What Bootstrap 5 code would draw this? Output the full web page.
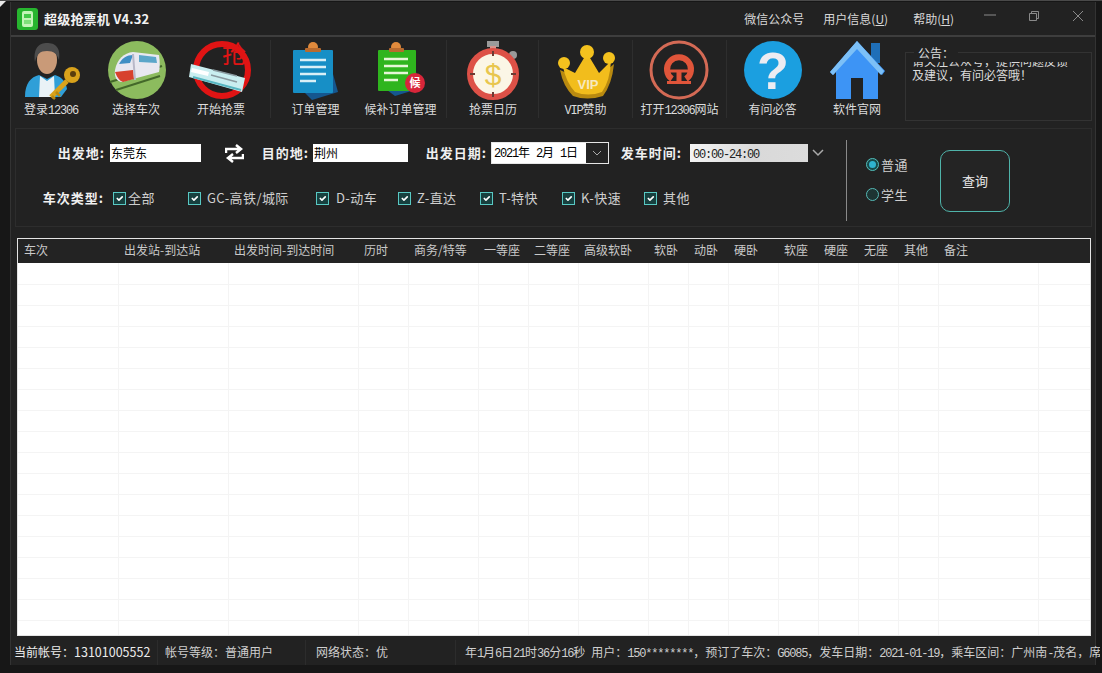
<!DOCTYPE html>
<html lang="zh-CN">
<head>
    <meta charset="UTF-8">
    <title>超级抢票机 V4.32</title>
    <link href="https://cdn.jsdelivr.net/npm/bootstrap@5.3.0/dist/css/bootstrap.min.css" rel="stylesheet">
    <style>
        html, body {
            margin: 0;
            height: 673px;
            overflow: hidden;
            background-color: #171717;
        }
        body, .form-control, .btn, .table {
            font-family: "Noto Sans CJK SC", "Liberation Sans", sans-serif;
            font-size: 12px;
        }
        .latin-run {
            font-family: "Liberation Mono", monospace;
            font-size: 12px;
            letter-spacing: -1.2px;
        }
        .app-window {
            width: 1102px;
            height: 673px;
            padding: 1px 6px 8px 10px;
            background-color: #171717;
            border-top: 1px solid #4a4a4a;
            position: relative;
            overflow: hidden;
        }
        .corner-tl {
            position: absolute;
            left: 0;
            top: -1px;
            width: 0;
            height: 0;
            border-top: 7px solid #e8e8e8;
            border-right: 7px solid transparent;
        }
        .app-inner {
            height: 100%;
            background-color: #222;
            display: flex;
            flex-direction: column;
            border-left: 1px solid #333;
            border-right: 1px solid #333;
        }
        .title-bar {
            height: 35px;
            flex: none;
            color: #e6e6e6;
            border-bottom: 2px solid #3e3e3e;
        }
        .app-logo {
            width: 21px;
            height: 22px;
            flex: none;
            margin-left: 6px;
            margin-right: 6px;
        }
        .app-title {
            font-weight: 700;
            font-size: 13px;
            letter-spacing: 0.2px;
            color: #f2f2f2;
        }
        .top-menu {
            margin-right: 11px;
            color: #d8d8d8;
            white-space: nowrap;
        }
        .top-menu svg {
            display: block;
            margin-bottom: 6px;
        }
        .tool-row {
            height: 85px;
            flex: none;
        }
        .tool-item {
            height: 85px;
            flex: none;
            padding-top: 3px;
            color: #dcdcdc;
            white-space: nowrap;
            line-height: 16px;
        }
        .tool-item svg {
            display: block;
            flex: none;
            margin-bottom: 1px;
            overflow: visible;
        }
        .tool-sep {
            width: 1px;
            height: 78px;
            margin-top: 3px;
            background-color: #2e2e2e;
            flex: none;
        }
        .notice-box {
            position: relative;
            width: 187px;
            height: 69px;
            flex: none;
            margin-top: 15px;
            margin-left: 9px;
            border: 1px solid #333;
            color: #dcdcdc;
            line-height: 14px;
        }
        .notice-title {
            position: absolute;
            left: 8px;
            top: -7px;
            padding: 0 4px;
            background-color: #222;
            line-height: 14px;
        }
        .notice-clip {
            height: 59px;
            margin: 9px 4px 0 6px;
            overflow: hidden;
        }
        .notice-clip p {
            margin: -8px 0 0;
        }
        .search-panel {
            height: 99px;
            flex: none;
            margin: 6px 0 0 4px;
            width: 1077px;
            border: 1px solid #2d2d2d;
            color: #e6e6e6;
        }
        .search-rows {
            width: 830px;
            flex: none;
        }
        .search-row1 {
            height: 24px;
            margin-top: 12px;
        }
        .search-row2 {
            height: 22px;
            margin-top: 22px;
        }
        .field-label {
            font-weight: 700;
            font-size: 13px;
            letter-spacing: 1px;
            white-space: nowrap;
            text-align: right;
            color: #f0f0f0;
            flex: none;
        }
        .form-control.dark-input {
            height: 18px;
            min-height: 18px;
            flex: none;
            padding: 0 1px;
            border: 0;
            border-radius: 0;
            color: #000;
            line-height: 18px;
            background-color: #fff;
        }
        .date-combo {
            width: 118px;
            height: 22px;
            flex: none;
            border: 1px solid #e6e6e6;
            background-color: #fff;
            color: #000;
        }
        .date-text {
            padding-left: 2px;
            white-space: pre;
        }
        .combo-arrow {
            width: 22px;
            height: 100%;
            background-color: #242424;
        }
        .time-combo {
            width: 118px;
            height: 18px;
            flex: none;
            padding-left: 3px;
            line-height: 18px;
            color: #222;
            background: linear-gradient(to right, #f4f4f4, #d9d9d9 55%, #dcdcdc);
        }
        .check-item {
            margin: 0;
            padding: 0;
            min-height: 0;
            display: flex;
            align-items: center;
            flex: none;
            font-size: 13px;
            letter-spacing: 0.4px;
            white-space: nowrap;
            color: #cfcfcf;
        }
        .form-check-input.teal-box {
            float: none;
            flex: none;
            width: 13px;
            height: 13px;
            margin: 0 6px 0 0;
            border: 1px solid #59c9c4;
            border-radius: 0;
            background-color: #17403f;
        }
        .form-check-input.teal-box:checked {
            background-color: #17403f;
            border-color: #59c9c4;
        }
        .form-check-input.teal-radio {
            float: none;
            flex: none;
            width: 13px;
            height: 13px;
            margin: 0 2px 0 0;
            border: 1px solid #56b9b5;
            background-color: #1d3433;
        }
        .form-check-input.teal-radio:checked {
            background-color: #2fb3d0;
            border: 3px solid #174a4a;
            background-image: none;
            outline: 1px solid #56b9b5;
            outline-offset: -1px;
        }
        .search-divider {
            width: 1px;
            height: 81px;
            margin-top: 11px;
            background-color: #8a8a8a;
        }
        .radio-col {
            width: 74px;
            padding-left: 19px;
            padding-top: 26px;
            gap: 10px;
        }
        .query-btn {
            width: 70px;
            height: 62px;
            margin: 21px 0 0 19px;
            padding: 0;
            font-size: 13px;
            color: #e6e6e6;
            background-color: #242424;
            border: 1px solid #4fb3a9;
            border-radius: 10px;
        }
        .grid-wrap {
            height: 398px;
            flex: none;
            width: 1074px;
            margin: 11px 0 0 6px;
            border: 1px solid #e4e4e4;
            background-color: #fff;
            overflow: hidden;
        }
        .ticket-table {
            table-layout: fixed;
            width: 1072px;
            margin: 0;
            --bs-table-bg: #fff;
        }
        .ticket-table thead th {
            height: 24px;
            padding: 0 0 2px 6px;
            font-weight: 400;
            color: #c9c9c9;
            background-color: #232323;
            border: 0;
            white-space: nowrap;
            vertical-align: middle;
            overflow: visible;
        }
        .ticket-table tbody td {
            height: 21px;
            padding: 0;
            border-width: 0 1px 1px 0;
            border-style: solid;
            border-color: #f4f4f4;
        }
        .status-bar {
            height: 25px;
            flex: none;
            margin-top: 4px;
            margin-right: -5px;
            color: #cfcfcf;
            white-space: nowrap;
            overflow: hidden;
            line-height: 24px;
        }
        .status-cell {
            flex: none;
            height: 25px;
            overflow: hidden;
            border-right: 1px solid #2c2c2c;
        }
        .status-account {
            width: 147px;
            padding-left: 3px;
            color: #ececec;
        }
        .status-account b {
            font-weight: 400;
            font-size: 12.5px;
        }
        .status-level {
            width: 148px;
            padding-left: 7px;
        }
        .status-net {
            width: 150px;
            padding-left: 10px;
        }
        .status-ticker {
            flex: none;
            width: 645px;
            padding-left: 9px;
            overflow: hidden;
            white-space: pre;
        }
    </style>
</head>
<body>

<div class="app-window">
    <div class="corner-tl"></div>
    <div class="app-inner">

        <!-- title bar -->
        <div class="title-bar d-flex align-items-center">
            <svg class="app-logo" viewBox="0 0 21 22">
                <rect width="21" height="22" rx="3" fill="#27b52f"/>
                <rect x="5" y="3" width="11" height="16" rx="2" fill="#c4f5b8"/>
                <rect x="7" y="6" width="7" height="4" fill="#45c94a"/>
                <rect x="7" y="12" width="7" height="4" fill="#7fe07a"/>
            </svg>
            <span class="app-title">超级抢票机 V4.32</span>
            <div class="top-menu ms-auto d-flex align-items-center">
                <span style="margin-right:19px">微信公众号</span>
                <span style="margin-right:25px">用户信息(<u>U</u>)</span>
                <span style="margin-right:30px">帮助(<u>H</u>)</span>
                <svg style="margin-right:32px" width="12" height="12" viewBox="0 0 12 12"><path d="M0 5h12" stroke="#8a8a8a"/></svg>
                <svg style="margin-right:32px" width="12" height="12" viewBox="0 0 12 12"><path d="M1.500 3.500h7v7h-7zM3.500 3V1.500h7v7H9" fill="none" stroke="#8a8a8a"/></svg>
                <svg width="12" height="12" viewBox="0 0 12 12"><path d="M1 1l10 10M11 1L1 11" stroke="#8a8a8a"/></svg>
            </div>
        </div>

        <!-- toolbar -->
        <div class="tool-row d-flex">
            <div class="tool-item d-flex flex-column align-items-center" style="width:80px">
                <svg width="64" height="60" viewBox="0 0 64 60">
                    <path d="M6 57c0-14 6-20 14-22l8 4 8-4c7 2 11 7 12 14l-6 8z" fill="#2f9fd8"/>
                    <path d="M21 36l7 5 7-5 1 21H20z" fill="#e9f2f6"/>
                    <ellipse cx="28" cy="20" rx="10" ry="14" fill="#c99a78"/>
                    <path d="M16 22C14 8 20 3 28 3s14 4 12 17c-2-6-5-9-12-9s-10 3-12 11z" fill="#4c4c4c"/>
                    <circle cx="53" cy="35" r="8" fill="#d9a21b"/>
                    <circle cx="54" cy="34" r="3" fill="#5a3d0d"/>
                    <path d="M48 41L32 57" stroke="#d9a21b" stroke-width="5"/>
                    <path d="M37 52l4 4M33 56l3 3" stroke="#b98812" stroke-width="2.500"/>
                </svg>
                <span>登录<span class="latin-run">12306</span></span>
            </div>
            <div class="tool-item d-flex flex-column align-items-center" style="width:90px">
                <svg width="64" height="60" viewBox="0 0 64 60">
                    <circle cx="33" cy="30" r="29" fill="#8cbb5e"/>
                    <path d="M6 42l52-16" stroke="#43682a" stroke-width="2"/>
                    <path d="M12 50l44-14" stroke="#43682a" stroke-width="2"/>
                    <path d="M11 30c2-11 9-17 18-18l26 3c1 7 1 12 0 17L18 42c-5 0-8-5-7-12z" fill="#e8e8f0"/>
                    <path d="M11 32c3 7 5 9 8 10l11-3-1-9z" fill="#d7412d"/>
                    <path d="M15 24c3-6 8-9 14-9l-3 8z" fill="#3f8fc4"/>
                    <path d="M35 15l17 2 1 6-18-1z" fill="#5ba6c9"/>
                    <path d="M29 14l2 26" stroke="#b8b8c8" stroke-width="2"/>
                </svg>
                <span>选择车次</span>
            </div>
            <div class="tool-item d-flex flex-column align-items-center" style="width:80px">
                <svg width="64" height="60" viewBox="0 0 64 60">
                    <circle cx="33" cy="30" r="26" fill="none" stroke="#e01414" stroke-width="6"/>
                    <path d="M2 24L56 38l-3 14L0 37z" fill="#c9eef0"/>
                    <path d="M3 28l17 4-1 4-17-4z" fill="#fff"/>
                    <path d="M4 37l48 13" stroke="#58b7c2" stroke-width="2"/>
                    <path d="M24 30l24 6M22 35l26 7" stroke="#8a9aa0" stroke-width="1.500"/>
                    <text x="45" y="23" text-anchor="middle" font-family="Noto Sans CJK SC" font-size="24" fill="#e01414">抢</text>
                </svg>
                <span>开始抢票</span>
            </div>
            <div class="tool-sep" style="margin-left:9px;margin-right:2px"></div>
            <div class="tool-item d-flex flex-column align-items-center" style="width:85px">
                <svg width="64" height="60" viewBox="0 0 64 60">
                    <path d="M44 16l10 36-26 8-8-8z" fill="#15578f"/>
                    <rect x="9" y="10" width="40" height="43" rx="1" fill="#178fc6"/>
                    <path d="M16 20h26M16 27h26M16 34h26M16 41h16" stroke="#d9f0f7" stroke-width="2.500"/>
                    <circle cx="29" cy="7" r="5" fill="#e08a3c"/>
                    <rect x="21" y="8" width="16" height="4" rx="1" fill="#b86b2f"/>
                </svg>
                <span>订单管理</span>
            </div>
            <div class="tool-item d-flex flex-column align-items-center" style="width:85px">
                <svg width="64" height="60" viewBox="0 0 64 60">
                    <path d="M42 16l10 32-26 8-8-6z" fill="#15578f"/>
                    <rect x="9" y="10" width="38" height="41" rx="1" fill="#2fb51e"/>
                    <path d="M15 19h24M15 26h24M15 33h24M15 40h14" stroke="#e6f7d8" stroke-width="2.500"/>
                    <circle cx="27" cy="7" r="5" fill="#e08a3c"/>
                    <rect x="20" y="8" width="15" height="4" rx="1" fill="#b86b2f"/>
                    <circle cx="46" cy="43" r="10" fill="#d8263a"/>
                    <text x="46" y="47" text-anchor="middle" font-family="Noto Sans CJK SC" font-size="11" font-weight="700" fill="#fff">候</text>
                </svg>
                <span>候补订单管理</span>
            </div>
            <div class="tool-sep" style="margin-left:3px;margin-right:1px"></div>
            <div class="tool-item d-flex flex-column align-items-center" style="width:90px">
                <svg width="64" height="60" viewBox="0 0 64 60">
                    <rect x="26" y="1" width="12" height="6" fill="#9a9a9a"/>
                    <rect x="29" y="6" width="6" height="4" fill="#d9928a"/>
                    <circle cx="52" cy="15" r="4" fill="#9a9a9a"/>
                    <circle cx="32" cy="34" r="23" fill="#fbf6e6" stroke="#dd5147" stroke-width="6"/>
                    <path d="M32 11v5M32 52v5M9 34h5M50 34h5" stroke="#6b3b34" stroke-width="2"/>
                    <text x="32" y="45" text-anchor="middle" font-family="Liberation Sans" font-size="30" fill="#e8c64e">$</text>
                </svg>
                <span>抢票日历</span>
            </div>
            <div class="tool-sep"></div>
            <div class="tool-item d-flex flex-column align-items-center" style="width:93px">
                <svg width="64" height="60" viewBox="0 0 64 60">
                    <path d="M6 30Q9 46 19 56Q33 61 49 56Q58 44 60 24L46 36L34 16L22 37Z" fill="#b98a10"/>
                    <path d="M9 27Q12 42 21 52Q34 57 48 52Q56 41 57 21L45 33L33 13L21 33Z" fill="#f2bd1c"/>
                    <circle cx="10" cy="23" r="6" fill="#f4c21e"/>
                    <circle cx="33" cy="12" r="7" fill="#f4c21e"/>
                    <circle cx="55" cy="18" r="6" fill="#f4c21e"/>
                    <text x="34" y="49" text-anchor="middle" font-family="Liberation Sans" font-size="13" font-weight="700" fill="#f7e9c0">VIP</text>
                </svg>
                <span><span class="latin-run">VIP</span>赞助</span>
            </div>
            <div class="tool-sep"></div>
            <div class="tool-item d-flex flex-column align-items-center" style="width:93px">
                <svg width="64" height="60" viewBox="0 0 64 60">
                    <circle cx="31" cy="30" r="28" fill="none" stroke="#d46a55" stroke-width="3"/>
                    <path d="M24 39a12 12 0 1 1 14 0" fill="none" stroke="#e0553a" stroke-width="6"/>
                    <path d="M22 31h18" stroke="#e0553a" stroke-width="3"/>
                    <rect x="28.500" y="30" width="5" height="11" fill="#e0553a"/>
                    <rect x="19" y="41" width="24" height="3" fill="#e0553a"/>
                </svg>
                <span>打开<span class="latin-run">12306</span>网站</span>
            </div>
            <div class="tool-sep"></div>
            <div class="tool-item d-flex flex-column align-items-center" style="width:91px">
                <svg width="64" height="60" viewBox="0 0 64 60">
                    <circle cx="32" cy="30" r="29" fill="#1b9fe0"/>
                    <text x="32" y="49" text-anchor="middle" font-family="Liberation Sans" font-size="52" font-weight="700" fill="#ececf2">?</text>
                </svg>
                <span>有问必答</span>
            </div>
            <div class="tool-item d-flex flex-column align-items-center" style="width:78px">
                <svg width="64" height="60" viewBox="0 0 64 60">
                    <rect x="46" y="3" width="9" height="20" fill="#1f6fb8"/>
                    <path d="M32 1L5 32l3 3 3-3v27h15V38h12v21h15V32l4 3 3-4z" fill="#3d94f5"/>
                    <path d="M32 1L5 32l3 3L32 9l24 26 3-4z" fill="#7cc0f7"/>
                </svg>
                <span>软件官网</span>
            </div>
            <div class="notice-box">
                <div class="notice-title">公告：</div>
                <div class="notice-clip">
                    <p>请关注公众号，提供问题反馈<br>及建议，有问必答哦！</p>
                </div>
            </div>
        </div>

        <!-- search panel -->
        <div class="search-panel d-flex">
            <div class="search-rows">
                <div class="search-row1 d-flex align-items-center">
                    <span class="field-label" style="width:90px;padding-right:1px">出发地:</span>
                    <input class="form-control dark-input ms-1" style="width:91px" value="东莞东">
                    <svg class="ms-4 flex-none" width="19" height="19" viewBox="0 0 19 19">
                        <path d="M1 9V5h13M11 1l5 4-5 4M18 10v4H5M8 10l-5 4 5 4" fill="none" stroke="#fff" stroke-width="2.500"/>
                    </svg>
                    <span class="field-label" style="width:65px">目的地:</span>
                    <input class="form-control dark-input ms-1" style="width:95px" value="荆州">
                    <span class="field-label" style="width:79px">出发日期:</span>
                    <div class="date-combo d-flex align-items-center justify-content-between ms-1">
                        <span class="date-text"><span class="latin-run">2021</span>年<span class="latin-run"> 2</span>月<span class="latin-run"> 1</span>日</span>
                        <div class="combo-arrow d-flex align-items-center justify-content-center">
                            <svg width="10" height="6" viewBox="0 0 10 6"><path d="M1 1l4 4 4-4" fill="none" stroke="#aaa"/></svg>
                        </div>
                    </div>
                    <span class="field-label" style="width:73px">发车时间:</span>
                    <div class="time-combo ms-2"><span class="latin-run">00:00-24:00</span></div>
                    <svg class="ms-1 flex-none" width="12" height="8" viewBox="0 0 12 8"><path d="M1 1l5 5 5-5" fill="none" stroke="#aaa" stroke-width="1.500"/></svg>
                </div>
                <div class="search-row2 d-flex align-items-center">
                    <span class="field-label" style="width:88px">车次类型:</span>
                    <label class="form-check check-item" style="margin-left:9px;width:75px"><input class="form-check-input teal-box" style="margin-right:2px" type="checkbox" checked>全部</label>
                    <label class="form-check check-item" style="width:128px"><input class="form-check-input teal-box" type="checkbox" checked>GC-高铁/城际</label>
                    <label class="form-check check-item" style="width:82px"><input class="form-check-input teal-box" style="margin-right:7px" type="checkbox" checked>D-动车</label>
                    <label class="form-check check-item" style="width:82px"><input class="form-check-input teal-box" type="checkbox" checked>Z-直达</label>
                    <label class="form-check check-item" style="width:82px"><input class="form-check-input teal-box" type="checkbox" checked>T-特快</label>
                    <label class="form-check check-item" style="width:82px"><input class="form-check-input teal-box" type="checkbox" checked>K-快速</label>
                    <label class="form-check check-item"><input class="form-check-input teal-box" type="checkbox" checked>其他</label>
                </div>
            </div>
            <div class="search-divider flex-none"></div>
            <div class="radio-col flex-none d-flex flex-column">
                <label class="form-check check-item"><input class="form-check-input teal-radio" type="radio" name="kind" checked>普通</label>
                <label class="form-check check-item"><input class="form-check-input teal-radio" type="radio" name="kind">学生</label>
            </div>
            <button class="btn query-btn flex-none">查询</button>
        </div>

        <!-- ticket grid -->
        <div class="grid-wrap">
            <table class="table ticket-table">
                <colgroup id="grid-cols"></colgroup>
                <thead><tr id="grid-head"></tr></thead>
                <tbody id="grid-body"></tbody>
            </table>
        </div>

        <!-- status bar -->
        <div class="status-bar d-flex">
            <div class="status-cell status-account">当前帐号：<b>13101005552</b></div>
            <div class="status-cell status-level">帐号等级：普通用户</div>
            <div class="status-cell status-net">网络状态：优</div>
            <div class="status-ticker">年<span class="latin-run">1</span>月<span class="latin-run">6</span>日<span class="latin-run">21</span>时<span class="latin-run">36</span>分<span class="latin-run">16</span>秒<span class="latin-run"> </span>用户：<span class="latin-run">150********</span>，预订了车次：<span class="latin-run">G6085</span>，发车日期：<span class="latin-run">2021-01-19</span>，乘车区间：广州南<span class="latin-run">-</span>茂名，席别：二等座</div>
        </div>
    </div>
</div>

<script src="https://cdn.jsdelivr.net/npm/bootstrap@5.3.0/dist/js/bootstrap.bundle.min.js"></script>
<script>
    const headers = ["车次", "出发站-到达站", "出发时间-到达时间", "历时", "商务/特等", "一等座", "二等座", "高级软卧", "软卧", "动卧", "硬卧", "软座", "硬座", "无座", "其他", "备注", ""];
    const widths = [100, 110, 130, 50, 70, 50, 50, 70, 40, 40, 50, 40, 40, 40, 40, 100, 52];

    document.getElementById("grid-cols").innerHTML = widths.map(w => `<col style="width:${w}px">`).join("");
    document.getElementById("grid-head").innerHTML = headers.map(h => `<th>${h}</th>`).join("");

    let rows = "";
    for (let i = 0; i < 18; i++) {
        rows += "<tr>" + widths.map(() => "<td></td>").join("") + "</tr>";
    }
    document.getElementById("grid-body").innerHTML = rows;
</script>

</body>
</html>
